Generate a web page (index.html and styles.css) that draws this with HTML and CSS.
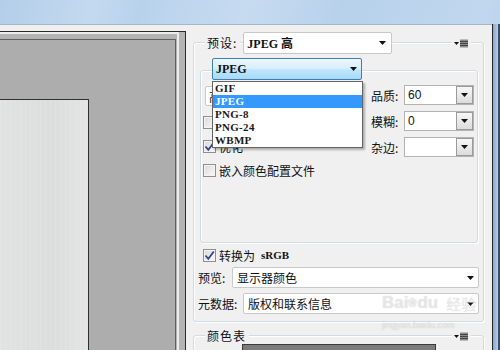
FILE: index.html
```html
<!DOCTYPE html>
<html lang="zh-CN">
<head>
  <meta charset="UTF-8">
  <title>存储为 Web 所用格式</title>
  <link rel="stylesheet" href="styles.css">
</head>
<body>
  <div class="screen">
    <div class="desk">
      <div class="window">
        <div class="doc">
          <div class="doc-tab"></div>
          <div class="doc-body">
            <div class="doc-well">
              <div class="doc-view">
                <div class="doc-image"></div>
              </div>
            </div>
          </div>
        </div>

        <div class="panel">
          <div class="group">
            <div class="group-head">
              <span class="legend">预设:</span>
              <div class="select preset">
                <span>JPEG 高</span>
                <svg class="arrow" width="7" height="4" viewBox="0 0 7 4"><path d="M0 0h7L3.5 4z"/></svg>
              </div>
              <span class="menu-icon">
                <svg width="15" height="9" viewBox="0 0 15 9"><path d="M0 3h5L2.5 6z" fill="#111"/><rect x="6" y="0.5" width="8" height="8" fill="#8a8a8a"/><path d="M6 2.5h8M6 4.5h8M6 6.5h8" stroke="#444" stroke-width="1"/></svg>
              </span>
            </div>

            <div class="subgroup">
              <div class="subgroup-head">
                <div class="select format">
                  <span>JPEG</span>
                  <svg class="arrow" width="7" height="4" viewBox="0 0 7 4"><path d="M0 0h7L3.5 4z"/></svg>
                  <ul class="format-list">
                    <li>GIF</li>
                    <li class="selected">JPEG</li>
                    <li>PNG-8</li>
                    <li>PNG-24</li>
                    <li>WBMP</li>
                  </ul>
                </div>
              </div>

              <div class="settings">
                <div class="settings-left">
                  <div class="select quality-preset"><span>高</span></div>
                  <label class="check-row"><span class="check"></span></label>
                  <label class="check-row"><span class="check"><svg width="11" height="11" viewBox="0 0 11 11"><path d="M1.5 5.5l2.8 3.3L9.8 1.5" fill="none" stroke="#30448f" stroke-width="1.8"/></svg></span>优化</label>
                  <label class="check-row"><span class="check"></span>嵌入颜色配置文件</label>
                </div>
                <div class="settings-right">
                  <div class="field">
                    <span class="field-label">品质:</span>
                    <div class="combo"><span>60</span><span class="combo-btn"><svg width="7" height="4" viewBox="0 0 7 4"><path d="M0 0h7L3.5 4z"/></svg></span></div>
                  </div>
                  <div class="field">
                    <span class="field-label">模糊:</span>
                    <div class="combo"><span>0</span><span class="combo-btn"><svg width="7" height="4" viewBox="0 0 7 4"><path d="M0 0h7L3.5 4z"/></svg></span></div>
                  </div>
                  <div class="field">
                    <span class="field-label">杂边:</span>
                    <div class="combo"><span></span><span class="combo-btn"><svg width="7" height="4" viewBox="0 0 7 4"><path d="M0 0h7L3.5 4z"/></svg></span></div>
                  </div>
                </div>
              </div>
            </div>

            <label class="check-row convert"><span class="check"><svg width="11" height="11" viewBox="0 0 11 11"><path d="M1.5 5.5l2.8 3.3L9.8 1.5" fill="none" stroke="#30448f" stroke-width="1.8"/></svg></span>转换为 <span class="latin">sRGB</span></label>

            <div class="row">
              <span class="row-label preview-label">预览:</span>
              <div class="select wide preview">
                <span>显示器颜色</span>
                <svg class="arrow" width="7" height="4" viewBox="0 0 7 4"><path d="M0 0h7L3.5 4z"/></svg>
              </div>
            </div>
            <div class="row meta-row">
              <span class="row-label meta-label">元数据:</span>
              <div class="select wide meta">
                <span>版权和联系信息</span>
                <svg class="arrow" width="7" height="4" viewBox="0 0 7 4"><path d="M0 0h7L3.5 4z"/></svg>
              </div>
            </div>
          </div>

          <div class="group color-table">
            <div class="group-head">
              <span class="legend">颜色表</span>
              <span class="menu-icon">
                <svg width="15" height="9" viewBox="0 0 15 9"><path d="M0 3h5L2.5 6z" fill="#111"/><rect x="6" y="0.5" width="8" height="8" fill="#8a8a8a"/><path d="M6 2.5h8M6 4.5h8M6 6.5h8" stroke="#444" stroke-width="1"/></svg>
              </span>
            </div>
            <div class="swatch-box"></div>
          </div>
        </div>
      </div>
      <div class="edge"></div>
    </div>

    <div class="watermark">
      <div class="wm-main"><span class="wm-logo">Bai<span class="wm-paw">&#x2740;</span>du</span><span class="wm-cn">经验</span></div>
      <div class="wm-url">jingyan.baidu.com</div>
    </div>
  </div>
</body>
</html>
```

FILE: styles.css
```css
* {
  box-sizing: border-box;
}
html, body {
  margin: 0;
  padding: 0;
}
body {
  width: 500px;
  height: 350px;
  overflow: hidden;
  font-family: "Noto Sans CJK SC", sans-serif;
  font-size: 12px;
  color: #111;
}
.screen {
  position: relative;
  width: 500px;
  height: 350px;
  overflow: hidden;
  padding-top: 24px;
  background: linear-gradient(105deg, #b4cee9 0%, #c3d9ef 16%, #b9d2ec 24%, #c6dbf0 42%, #b8d1eb 58%, #c0d7ee 82%, #b2cce8 100%);
}
.desk {
  display: flex;
  height: 326px;
}
.window {
  width: 492px;
  display: flex;
  background: #f0f0f0;
  border-top: 1px solid #a8b5c3;
}

/* document area */
.doc {
  width: 186px;
  margin-top: 6px;
  border-top: 1px solid #2b2b2b;
  border-right: 1px solid #2b2b2b;
  display: flex;
  flex-direction: column;
}
.doc-tab {
  height: 16px;
  background: #b4b4b4;
}
.doc-body {
  flex: 1;
  display: flex;
  background: #b4b4b4;
  padding-right: 6px;
}
.doc-well {
  flex: 1;
  display: flex;
  border-top: 2px solid #ececec;
  border-right: 2px solid #ececec;
  padding: 5px 1px 0 0;
}
.doc-view {
  flex: 1;
  background: #adadad;
  border-top: 1px solid #5e5e5e;
  border-right: 1px solid #5e5e5e;
}
.doc-image {
  width: 89px;
  height: 300px;
  margin-top: 59px;
  border-top: 1px solid #2f2f2f;
  border-right: 1px solid #2f2f2f;
  background-color: #dcdedd;
  background-image:
    linear-gradient(90deg, rgba(255,255,255,0.15), rgba(255,255,255,0) 60%, rgba(255,255,255,0.2)),
    repeating-linear-gradient(90deg, rgba(255,255,255,0.12) 0 1px, transparent 1px 5px);
}

/* right panel */
.panel {
  flex: 1;
  padding: 17px 8px 0 7px;
}
.group {
  border: 1px solid #d3dbe1;
  border-radius: 3px;
  box-shadow: inset 1px 1px 0 #fff, 1px 1px 0 #fff;
  padding-bottom: 7px;
}
.group-head {
  display: flex;
  align-items: center;
  height: 22px;
  margin-top: -11px;
}
.legend {
  margin-left: 11px;
  padding: 0 3px 0 2px;
  background: #f0f0f0;
  letter-spacing: 1px;
  line-height: 16px;
}
.menu-icon {
  margin-left: auto;
  margin-right: 12px;
  padding: 0 2px;
  background: #f0f0f0;
  display: flex;
}
.select {
  display: flex;
  align-items: center;
  background: #fff;
  border: 1px solid #c9c9c9;
  border-radius: 2px;
  padding: 0 4px 0 3px;
}
.select .arrow {
  margin-left: auto;
  fill: #111;
}
.preset {
  width: 149px;
  height: 22px;
  margin-left: 3px;
  padding-right: 5px;
  font-family: "Liberation Serif", "Noto Sans CJK SC", serif;
  font-weight: bold;
  font-size: 12px;
}

/* format sub group */
.subgroup {
  margin: 16px 5px 0 6px;
  height: 173px;
  border: 1px solid #d3dbe1;
  border-radius: 3px;
  box-shadow: inset 1px 1px 0 #fff, 1px 1px 0 #fff;
}
.subgroup-head {
  margin-top: -13px;
  padding-left: 11px;
  height: 22px;
}
.format {
  position: relative;
  width: 150px;
  height: 22px;
  border-color: #3c7fb1;
  background: linear-gradient(#eaf6fd, #d9f0fc 45%, #bee6fd 55%, #a7d9f5);
  font-family: "Liberation Serif", serif;
  font-weight: bold;
  font-size: 12px;
}
.format-list {
  position: absolute;
  top: 22px;
  left: -1px;
  width: 151px;
  margin: 0;
  padding: 0;
  list-style: none;
  background: #fff;
  border: 1px solid #646464;
  box-shadow: 2px 2px 2px rgba(0,0,0,0.28);
  z-index: 5;
}
.format-list li {
  height: 13px;
  line-height: 13px;
  padding-left: 2px;
  font-family: "Liberation Serif", serif;
  font-weight: bold;
  font-size: 11px;
  letter-spacing: 0.3px;
  color: #1a1a1a;
}
.format-list li.selected {
  background: #3399ff;
  color: #fff;
}
.settings {
  display: flex;
  padding-top: 5px;
}
.settings-left {
  flex: 1;
  padding-left: 2px;
}
.quality-preset {
  width: 150px;
  height: 20px;
  margin: 1px 0 4px 2px;
}
.check-row {
  display: flex;
  align-items: center;
  gap: 3px;
  height: 24px;
}
.check {
  width: 13px;
  height: 13px;
  border: 1px solid #8e8f8f;
  background: linear-gradient(135deg, #d8d8d8, #fbfbfb);
  box-shadow: inset 0 0 0 1px #f4f4f4;
  display: flex;
  align-items: center;
  justify-content: center;
}
.settings-right {
  width: 103px;
  margin-right: 3px;
}
.field {
  display: flex;
  align-items: center;
  height: 20px;
  margin-bottom: 6px;
}
.field-label {
  width: 33px;
}
.combo {
  width: 70px;
  height: 20px;
  display: flex;
  align-items: center;
  background: #fff;
  border: 1px solid #b3b3b3;
  padding-left: 3px;
  font-family: "Liberation Sans", sans-serif;
  font-size: 12px;
}
.combo-btn {
  margin-left: auto;
  width: 17px;
  height: 18px;
  display: flex;
  align-items: center;
  justify-content: center;
  border: 1px solid #9a9a9a;
  background: linear-gradient(#f7f7f7, #dcdcdc);
  fill: #111;
}

/* lower rows */
.convert {
  height: 18px;
  margin-top: 3px;
  padding-left: 9px;
}
.latin {
  font-family: "Liberation Serif", serif;
  font-weight: bold;
  font-size: 11px;
  margin-left: 3px;
}
.row {
  display: flex;
  align-items: center;
  height: 21px;
  margin-top: 3px;
  padding-left: 4px;
}
.meta-row {
  margin-top: 5px;
}
.preview-label {
  width: 34px;
}
.meta-label {
  width: 45px;
}
.wide {
  height: 21px;
  padding-left: 4px;
}
.preview {
  width: 247px;
}
.meta {
  width: 236px;
}

/* colour table */
.color-table {
  margin-top: 13px;
  height: 60px;
}
.color-table .group-head {
  height: 16px;
  margin-top: -8px;
}
.swatch-box {
  width: 194px;
  height: 20px;
  margin-left: 48px;
  background: #7d7d7d;
  border: 1px solid #3b3b3b;
}

.edge {
  width: 8px;
  border-left: 1px solid #272727;
  border-right: 2px solid #3b4c63;
  background: linear-gradient(90deg, #86a8cf, #b5cfea);
}

/* watermark */
.watermark {
  position: absolute;
  left: 382px;
  top: 292px;
  color: rgba(255,255,255,0.5);
  text-shadow: 0 0 1px rgba(80,80,80,0.3);
  pointer-events: none;
}
.wm-main {
  display: flex;
  align-items: flex-end;
  gap: 8px;
}
.wm-logo {
  font-family: "Liberation Sans", sans-serif;
  font-weight: bold;
  font-size: 17px;
  line-height: 22px;
}
.wm-paw {
  font-size: 9px;
  vertical-align: top;
}
.wm-cn {
  font-size: 15px;
  line-height: 20px;
}
.wm-url {
  font-family: "Liberation Sans", sans-serif;
  font-size: 9px;
  margin-top: 6px;
}
```
